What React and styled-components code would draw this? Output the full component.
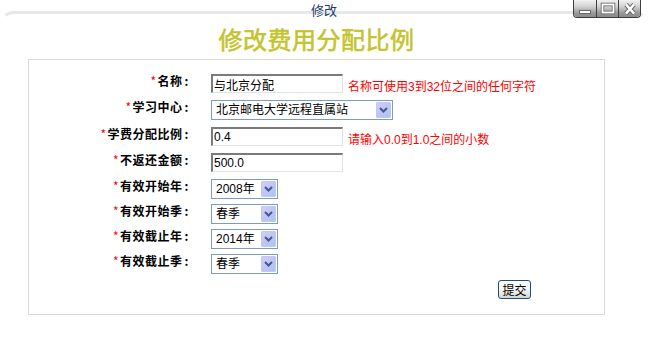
import React from "react";
import styled, { createGlobalStyle } from "styled-components";

const GlobalStyle = createGlobalStyle`
  html, body { margin: 0; padding: 0; background: #fff; }
  body {
    font-family: "Noto Sans CJK SC", "Liberation Sans", sans-serif;
    font-size: 12px;
    color: #000;
  }
  * { box-sizing: border-box; }
`;

const Window = styled.div`
  position: relative;
  width: 648px;
  height: 354px;
  overflow: hidden;
  background: #fff;
  padding-top: 11px;
`;

const Frame = styled.div`
  margin: 0 1px;
  height: 343px;
  border-top: 3px solid #e8e8e8;
  border-left: 3px solid transparent;
  border-right: 3px solid transparent;
  border-radius: 12px 12px 0 0;
`;

const Caption = styled.div`
  margin-top: -12px;
  text-align: center;
  font-size: 13px;
  line-height: 16px;
  color: #1b3c6b;
`;

const Content = styled.div`
  margin-left: 24px;
  width: 577px;
`;

const Heading = styled.h1`
  margin: 9px 0 0;
  text-align: center;
  font-size: 24px;
  line-height: 24px;
  font-weight: 400;
  letter-spacing: 0.5px;
  color: #c4c42e;
  -webkit-text-stroke: 0.6px #c4c42e;
`;

const Box = styled.div`
  margin-top: 8px;
  height: 256px;
  border: 1px solid #d9d9d9;
  padding-top: 12px;
`;

const Form = styled.div`
  display: grid;
  grid-template-columns: 160px 1fr;
  grid-template-rows: 26px 27px 26px 26px 25px 25px 25px 26px auto;
  column-gap: 22px;
`;

const Label = styled.div`
  padding-top: 2px;
  text-align: right;
  font-weight: 700;
  line-height: 14px;
  letter-spacing: 0.5px;
  white-space: nowrap;
`;

const Star = styled.span`
  color: #ff0000;
  font-weight: 400;
  margin-right: 1px;
`;

const Colon = styled.span`
  margin-left: 2px;
`;

const Field = styled.div`
  display: flex;
  align-items: flex-start;
  gap: 5px;
  padding-top: 2px;
`;

const TextInput = styled.input`
  width: 132px;
  height: 19px;
  margin: 0;
  border-style: solid;
  border-width: 2px 1px 1px 2px;
  border-color: #7b7b7b #e2e2e2 #e2e2e2 #7b7b7b;
  padding: 0 1px;
  font-family: "Liberation Sans", "Noto Sans CJK SC", sans-serif;
  font-size: 12px;
  color: #000;
  background: #fff;
  outline: none;
`;

const Hint = styled.span`
  margin-top: 6px;
  color: #ff0000;
  font-family: "Liberation Sans", "Noto Sans CJK SC", sans-serif;
  font-size: 12px;
  line-height: 14px;
  white-space: nowrap;
`;

const SelectBox = styled.div`
  display: flex;
  align-items: center;
  justify-content: space-between;
  width: ${(p) => p.$w}px;
  height: 20px;
  border: 1px solid #7f9db9;
  background: #fff;
  padding-left: 4px;
  font-family: "Liberation Sans", "Noto Sans CJK SC", sans-serif;
  font-size: 12px;
  line-height: 18px;
  white-space: nowrap;
`;

const ArrowBtn = styled.span`
  display: flex;
  align-items: center;
  justify-content: center;
  width: 15px;
  height: 16px;
  margin-right: 1px;
  border: 1px solid #bccbf3;
  border-radius: 1px;
  background: linear-gradient(135deg, #d4cdf9 0%, #c3c4f6 45%, #a8c6f0 100%);
`;

const SubmitButton = styled.button`
  margin: 0 0 0 287px;
  width: 33px;
  height: 19px;
  padding: 0;
  border: 1px solid #1f4d7a;
  border-radius: 3px;
  background: linear-gradient(to bottom, #ffffff 0%, #f4f4f2 50%, #d6d6d0 100%);
  font-family: "Noto Sans CJK SC", sans-serif;
  font-size: 12px;
  line-height: 16px;
  color: #000;
`;

const WinButtons = styled.div`
  position: absolute;
  top: 0;
  right: 7px;
  display: flex;
  border: 1px solid #3e3e3e;
  border-top: none;
  border-radius: 0 0 4px 4px;
  overflow: hidden;
`;

const WinButton = styled.span`
  display: flex;
  align-items: center;
  justify-content: center;
  width: 22px;
  height: 17px;
  background: linear-gradient(to bottom, #f2f2f2 0%, #d0d0d0 40%, #9a9a9a 75%, #8a8a8a 100%);
  & + & { border-left: 1px solid #3e3e3e; }
`;

const Chevron = () => (
  <svg width="9" height="6" viewBox="0 0 9 6">
    <polyline points="1,1 4.5,4.5 8,1" fill="none" stroke="#3e5c8c" strokeWidth="2" />
  </svg>
);

const Select = ({ w, value }) => (
  <SelectBox $w={w}>
    <span>{value}</span>
    <ArrowBtn>
      <Chevron />
    </ArrowBtn>
  </SelectBox>
);

const MinIcon = () => (
  <svg width="16" height="14" viewBox="0 0 16 14">
    <rect x="2.5" y="8.5" width="11" height="3" fill="#fff" stroke="#6a6a6a" strokeWidth="1" />
  </svg>
);
const MaxIcon = () => (
  <svg width="16" height="14" viewBox="0 0 16 14">
    <rect x="2.5" y="2.5" width="11" height="8" fill="none" stroke="#6a6a6a" strokeWidth="3.5" />
    <rect x="2.5" y="2.5" width="11" height="8" fill="none" stroke="#fff" strokeWidth="1.8" />
  </svg>
);
const CloseIcon = () => (
  <svg width="16" height="14" viewBox="0 0 16 14">
    <path d="M4 2.5 L12 11.5 M12 2.5 L4 11.5" stroke="#6a6a6a" strokeWidth="4.5" />
    <path d="M4 2.5 L12 11.5 M12 2.5 L4 11.5" stroke="#fff" strokeWidth="2.6" />
  </svg>
);

const rows = [
  { label: "名称", type: "input", value: "与北京分配", hint: "名称可使用3到32位之间的任何字符" },
  { label: "学习中心", type: "select", value: "北京邮电大学远程直属站", w: 182 },
  { label: "学费分配比例", type: "input", value: "0.4", hint: "请输入0.0到1.0之间的小数" },
  { label: "不返还金额", type: "input", value: "500.0" },
  { label: "有效开始年", type: "select", value: "2008年", w: 67 },
  { label: "有效开始季", type: "select", value: "春季", w: 67 },
  { label: "有效截止年", type: "select", value: "2014年", w: 67 },
  { label: "有效截止季", type: "select", value: "春季", w: 67 },
];

export default function App() {
  return (
    <>
      <GlobalStyle />
      <Window>
        <Frame>
          <Caption>修改</Caption>
          <Content>
            <Heading>修改费用分配比例</Heading>
            <Box>
              <Form>
                {rows.map((r) => (
                  <React.Fragment key={r.label}>
                    <Label>
                      <Star>*</Star>
                      {r.label}
                      <Colon>:</Colon>
                    </Label>
                    <Field>
                      {r.type === "input" ? (
                        <TextInput readOnly defaultValue={r.value} />
                      ) : (
                        <Select w={r.w} value={r.value} />
                      )}
                      {r.hint && <Hint>{r.hint}</Hint>}
                    </Field>
                  </React.Fragment>
                ))}
                <div />
                <Field>
                  <SubmitButton type="button">提交</SubmitButton>
                </Field>
              </Form>
            </Box>
          </Content>
        </Frame>
        <WinButtons>
          <WinButton><MinIcon /></WinButton>
          <WinButton><MaxIcon /></WinButton>
          <WinButton><CloseIcon /></WinButton>
        </WinButtons>
      </Window>
    </>
  );
}
